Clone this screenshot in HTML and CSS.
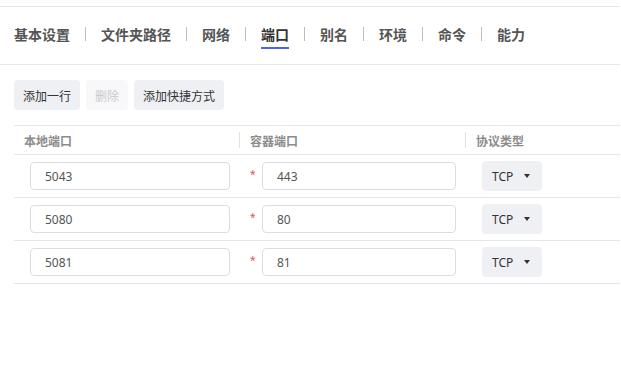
FILE: index.html
```html
<!DOCTYPE html>
<html lang="zh-CN">
<head>
    <meta charset="UTF-8">
    <meta name="viewport" content="width=device-width, initial-scale=1.0">
    <title>端口</title>
    <link rel="stylesheet" href="styles.css">
</head>
<body>
    <div class="panel">
        <div class="tabs">
            <span class="tab">基本设置</span><span class="sep"></span>
            <span class="tab">文件夹路径</span><span class="sep"></span>
            <span class="tab">网络</span><span class="sep"></span>
            <span class="tab active">端口</span><span class="sep"></span>
            <span class="tab">别名</span><span class="sep"></span>
            <span class="tab">环境</span><span class="sep"></span>
            <span class="tab">命令</span><span class="sep"></span>
            <span class="tab">能力</span>
        </div>

        <div class="content">
            <div class="toolbar">
                <button type="button" class="btn">添加一行</button>
                <button type="button" class="btn" disabled>删除</button>
                <button type="button" class="btn">添加快捷方式</button>
            </div>

            <div class="port-table">
                <div class="row head">
                    <div class="cell">本地端口</div>
                    <div class="cell"><span class="divider"></span>容器端口</div>
                    <div class="cell"><span class="divider"></span>协议类型</div>
                </div>
                <div class="row">
                    <div class="cell local"><input type="text" class="field local-field" value="5043"></div>
                    <div class="cell container"><span class="required">*</span><input type="text" class="field container-field" value="443"></div>
                    <div class="cell proto"><div class="select">TCP<span class="caret"></span></div></div>
                </div>
                <div class="row">
                    <div class="cell local"><input type="text" class="field local-field" value="5080"></div>
                    <div class="cell container"><span class="required">*</span><input type="text" class="field container-field" value="80"></div>
                    <div class="cell proto"><div class="select">TCP<span class="caret"></span></div></div>
                </div>
                <div class="row">
                    <div class="cell local"><input type="text" class="field local-field" value="5081"></div>
                    <div class="cell container"><span class="required">*</span><input type="text" class="field container-field" value="81"></div>
                    <div class="cell proto"><div class="select">TCP<span class="caret"></span></div></div>
                </div>
            </div>
        </div>
    </div>
</body>
</html>
```

FILE: styles.css
```css
body {
    margin: 0;
    padding-top: 6px;
    background: #fff;
    font-family: "Noto Sans", "Noto Sans CJK SC", sans-serif;
    color: #333;
}

.panel {
    width: 620px;
    border-top: 1px solid #e8e8eb;
}

/* tab bar */
.tabs {
    display: flex;
    align-items: flex-start;
    padding: 17px 0 15px 14px;
    border-bottom: 1px solid #e8e8eb;
}

.tab {
    font-family: "Noto Sans CJK SC", sans-serif;
    font-size: 14px;
    font-weight: 700;
    line-height: 20px;
    color: #555;
    padding-bottom: 3px;
    border-bottom: 2px solid transparent;
    cursor: pointer;
}

.tab.active {
    color: #333;
    border-bottom-color: #4a62f5;
}

.sep {
    width: 1px;
    height: 14px;
    margin: 3px 15px 0;
    background: #bdbdbd;
}

/* content */
.content {
    padding: 15px 0 0 14px;
}

.toolbar {
    display: flex;
    gap: 6px;
    margin-bottom: 15px;
}

.btn {
    height: 30px;
    padding: 0 9px;
    border: none;
    border-radius: 4px;
    background: #eff0f4;
    color: #333;
    font-family: "Noto Sans CJK SC", sans-serif;
    font-size: 12px;
    cursor: pointer;
}

.btn:disabled {
    background: #f8f8fa;
    color: #c9c9cc;
    cursor: default;
}

/* port table */
.port-table {
    border-top: 1px solid #e5e6ea;
}

.row {
    display: grid;
    grid-template-columns: 225px 226px 1fr;
    height: 42px;
    border-bottom: 1px solid #e5e6ea;
}

.row.head {
    height: 28px;
}

.cell {
    display: flex;
    align-items: center;
}

.head .cell {
    font-family: "Noto Sans CJK SC", sans-serif;
    font-size: 12px;
    font-weight: 700;
    color: #8c8c8c;
}

.head .cell:first-child {
    padding-left: 10px;
}

.divider {
    width: 1px;
    height: 16px;
    margin-right: 10px;
    background: #e2e2e5;
}

.field {
    box-sizing: border-box;
    height: 28px;
    padding: 0 14px;
    border: 1px solid #dcdde1;
    border-radius: 4px;
    font-family: "Noto Sans", sans-serif;
    font-size: 12px;
    color: #555;
    outline: none;
}

.local {
    padding-left: 16px;
}

.local-field {
    width: 200px;
}

.container {
    padding-left: 11px;
}

.required {
    width: 5px;
    margin-right: 7px;
    margin-top: -5px;
    color: #e34d59;
    font-size: 10px;
}

.container-field {
    width: 194px;
}

.proto {
    padding-left: 17px;
}

.select {
    display: flex;
    align-items: center;
    box-sizing: border-box;
    width: 60px;
    height: 30px;
    padding-left: 10px;
    border-radius: 4px;
    background: #eff0f4;
    font-size: 12px;
    color: #333;
    cursor: pointer;
}

.caret {
    width: 0;
    height: 0;
    margin-left: 11px;
    border-left: 3.5px solid transparent;
    border-right: 3.5px solid transparent;
    border-top: 4px solid #333;
}
```
